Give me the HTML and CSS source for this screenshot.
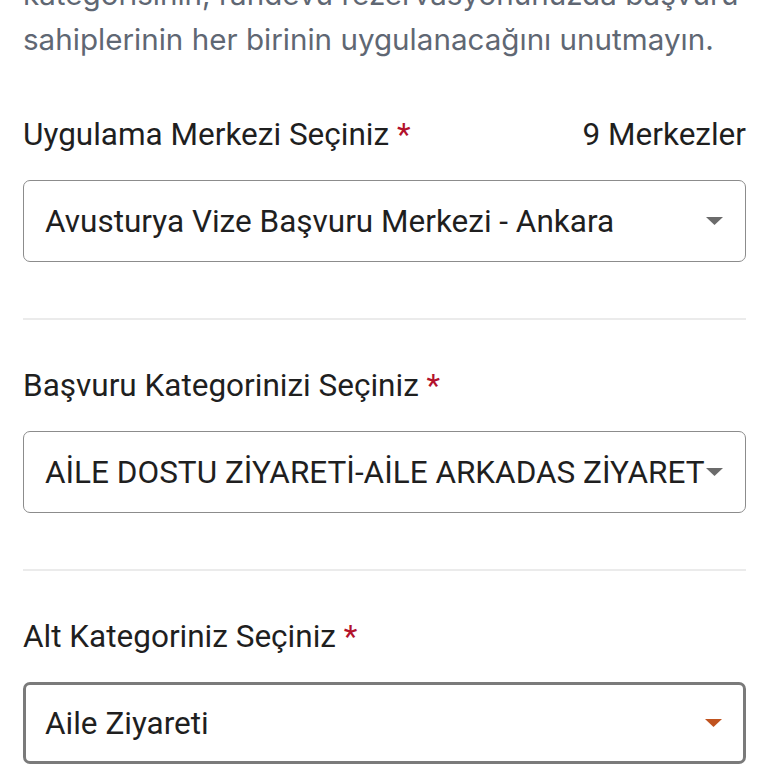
FILE: index.html
```html
<!DOCTYPE html>
<html lang="tr">
<head>
  <meta charset="utf-8">
  <title>Randevu</title>
  <link rel="stylesheet" href="styles.css">
</head>
<body>
  <div class="form">
    <p class="notice">Lütfen seçtiğiniz başvuru<br>kategorisinin, randevu rezervasyonunuzda başvuru<br>sahiplerinin her birinin uygulanacağını unutmayın.</p>

    <div class="field">
      <div class="field-head">
        <label>Uygulama Merkezi Seçiniz <span class="req">*</span></label>
        <span class="count">9 Merkezler</span>
      </div>
      <div class="select">
        <span class="value">Avusturya Vize Başvuru Merkezi - Ankara</span>
        <svg class="arrow" width="17" height="8" viewBox="0 0 17 8"><path d="M0 0h17L8.5 8z"/></svg>
      </div>
    </div>

    <hr class="divider">

    <div class="field">
      <div class="field-head">
        <label>Başvuru Kategorinizi Seçiniz <span class="req">*</span></label>
      </div>
      <div class="select">
        <span class="value">AİLE DOSTU ZİYARETİ-AİLE ARKADAS ZİYARETİ</span>
        <svg class="arrow" width="17" height="8" viewBox="0 0 17 8"><path d="M0 0h17L8.5 8z"/></svg>
      </div>
    </div>

    <hr class="divider">

    <div class="field">
      <div class="field-head">
        <label>Alt Kategoriniz Seçiniz <span class="req">*</span></label>
      </div>
      <div class="select focused">
        <span class="value">Aile Ziyareti</span>
        <svg class="arrow" width="17" height="8" viewBox="0 0 17 8"><path d="M0 0h17L8.5 8z"/></svg>
      </div>
    </div>
  </div>
</body>
</html>
```

FILE: styles.css
```css
body {
  margin: 0;
  font-family: Roboto, "Liberation Sans", sans-serif;
  color: #1f1f1f;
  background: #fff;
  overflow: hidden;
}
.form {
  padding: 0 22px 0 23px;
}
.notice {
  font-family: Inter, "Noto Sans", sans-serif;
  font-size: 29.6px;
  line-height: 45px;
  color: #5f6773;
  margin: -73px 0 0 0;
}
.field {
  margin-top: 51px;
}
.divider + .field {
  margin-top: 44px;
}
.field-head {
  display: flex;
  justify-content: space-between;
  align-items: baseline;
  font-size: 31.5px;
  line-height: 44px;
}
.req {
  color: #b3122c;
}
.select {
  margin-top: 23px;
  height: 80px;
  border: 1px solid #8c8c8c;
  border-radius: 7px;
  display: flex;
  align-items: center;
  padding: 0 22px 0 21px;
  font-size: 31.5px;
}
.select .value {
  flex: 1;
  white-space: nowrap;
  overflow: hidden;
}
.arrow {
  flex: none;
  fill: #6b6b6b;
}
.focused {
  border: 3px solid #7a7a7a;
  height: 76px;
  padding: 0 21px 0 19px;
}
.focused .arrow {
  fill: #c0531f;
}
.divider {
  border: 0;
  border-top: 2px solid #ebebeb;
  margin: 56px 0 0 0;
}
```
